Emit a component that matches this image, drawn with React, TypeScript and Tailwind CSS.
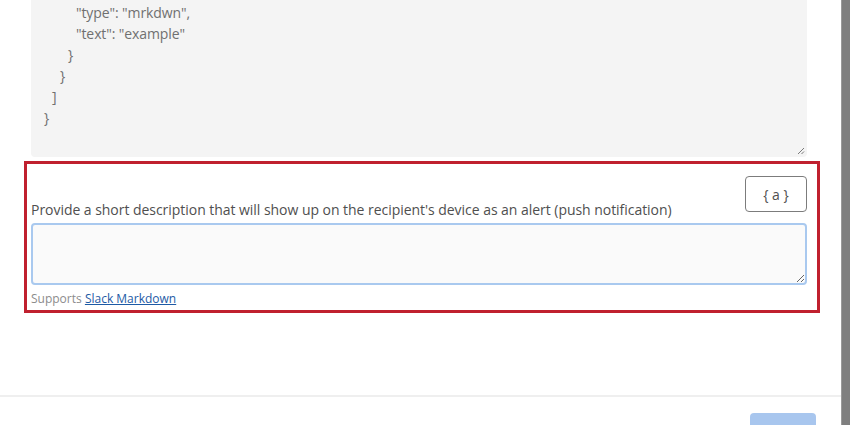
import React from "react";

const codeLines: { text: string; indent: string }[] = [
  { text: '"type": "mrkdwn",', indent: "pl-8" },
  { text: '"text": "example"', indent: "pl-8" },
  { text: "}", indent: "pl-6" },
  { text: "}", indent: "pl-4" },
  { text: "]", indent: "pl-2" },
  { text: "}", indent: "pl-0" },
];

function ResizeGrip() {
  return (
    <svg width="8" height="8" viewBox="0 0 8 8" className="absolute bottom-[2px] right-[2px]">
      <path d="M7 1L1 7" stroke="#7a7a7a" strokeWidth="1" />
      <path d="M7 4.5L4.5 7" stroke="#7a7a7a" strokeWidth="1" />
    </svg>
  );
}

export default function App() {
  return (
    <div className="flex h-[425px] w-[850px] overflow-hidden bg-white font-['Open_Sans',sans-serif]">
      <div className="flex w-[841px] flex-col">
        {/* json payload textarea, scrolled to the end */}
        <div className="relative ml-[31px] h-[157px] w-[776px] rounded-b-[4px] bg-[#f4f4f4] pl-[13px] pt-[2px] text-[14px] leading-[21px] tracking-[-0.1px] text-[#707070]">
          {codeLines.map((line, i) => (
            <div key={i} className={line.indent}>
              {line.text}
            </div>
          ))}
          <ResizeGrip />
        </div>

        {/* highlighted push notification field */}
        <div className="ml-[24px] mt-[4px] w-[796px] border-[3px] border-[#c0202f] pb-[3px] pl-[4px] pr-[10px] pt-[12px]">
          <div className="flex items-end justify-between">
            <p className="text-[14px] leading-[20px] tracking-[-0.04px] text-[#4f4f4f]">
              Provide a short description that will show up on the recipient's device as an alert (push notification)
            </p>
            <button className="mb-2 flex h-[36px] w-[62px] items-center justify-center rounded-[4px] border border-[#7c7c7c] bg-white text-[14px] text-[#4f4f4f]">
              {"{ a }"}
            </button>
          </div>
          <textarea className="mt-[3px] block h-[62px] w-full resize-y rounded-[4px] border-2 border-[#a9c9ef] bg-[#fafafa] outline-none" />
          <p className="mt-[6px] text-[12px] leading-[16px] text-[#8c8c8c]">
            Supports{" "}
            <a href="#" className="text-[#1d5aa5] underline">
              Slack Markdown
            </a>
          </p>
        </div>

        <div className="flex-1" />

        {/* footer */}
        <div className="h-[30px] border-t-2 border-[#efefef]">
          <div className="flex justify-end pr-[25px] pt-[16px]">
            <div className="h-[20px] w-[66px] rounded-t-[4px] bg-[#a8c6ee]" />
          </div>
        </div>
      </div>
      <div className="w-[9px] border-l border-[#9a9a9a] bg-[#7f7f7f]" />
    </div>
  );
}
